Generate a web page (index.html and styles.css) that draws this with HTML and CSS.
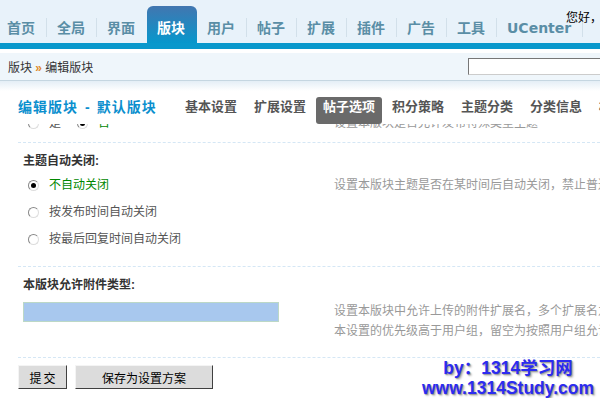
FILE: index.html
```html
<!DOCTYPE html>
<html lang="zh-CN">
<head>
    <meta charset="UTF-8">
    <title>编辑版块</title>
    <link rel="stylesheet" href="styles.css">
</head>
<body>

    <div class="header">
        <ul class="nav">
            <li><a href="#">首页</a></li>
            <li><a href="#">全局</a></li>
            <li><a href="#">界面</a></li>
            <li class="on"><a href="#">版块</a></li>
            <li><a href="#">用户</a></li>
            <li><a href="#">帖子</a></li>
            <li><a href="#">扩展</a></li>
            <li><a href="#">插件</a></li>
            <li><a href="#">广告</a></li>
            <li><a href="#">工具</a></li>
            <li><a href="#" class="latin">UCenter</a></li>
        </ul>
        <div class="welcome">您好，<a href="#">admin</a></div>
    </div>

    <div class="crumb">
        <div class="crumb-path">版块 <span class="raquo">&raquo;</span> 编辑版块</div>
        <input type="text" class="search">
    </div>

    <div class="main">
        <div class="title-bar">
            <h3 class="title">编辑版块<span class="dash">-</span>默认版块</h3>
            <ul class="subtabs">
                <li>基本设置</li>
                <li>扩展设置</li>
                <li class="on">帖子选项</li>
                <li>积分策略</li>
                <li>主题分类</li>
                <li>分类信息</li>
                <li>权限相关</li>
            </ul>
        </div>

        <div class="content">
            <div class="section first">
                <div class="row">
                    <div class="field inline">
                        <label class="opt"><span class="radio"></span>是</label>
                        <label class="opt checked"><span class="radio"></span>否</label>
                    </div>
                    <div class="tips">设置本版块是否允许发布特殊类型主题</div>
                </div>
            </div>

            <div class="section">
                <h4 class="label">主题自动关闭:</h4>
                <div class="row">
                    <div class="field options">
                        <label class="opt checked"><span class="radio"></span>不自动关闭</label>
                        <label class="opt"><span class="radio"></span>按发布时间自动关闭</label>
                        <label class="opt"><span class="radio"></span>按最后回复时间自动关闭</label>
                    </div>
                    <div class="tips tips-top">设置本版块主题是否在某时间后自动关闭，禁止普通用户回复</div>
                </div>
            </div>

            <div class="section">
                <h4 class="label">本版块允许附件类型:</h4>
                <div class="row row-input">
                    <div class="field">
                        <input type="text" class="txt">
                    </div>
                    <div class="tips tips-lines">
                        设置本版块中允许上传的附件扩展名，多个扩展名之间用半角逗号 "," 分割<br>
                        本设置的优先级高于用户组，留空为按照用户组允许的附件类型为准
                    </div>
                </div>
            </div>

            <div class="buttons">
                <button class="btn btn-submit">提交</button>
                <button class="btn btn-save">保存为设置方案</button>
            </div>
        </div>

        <div class="watermark">
            by：1314学习网<br>
            www.1314Study.com
        </div>
    </div>

</body>
</html>
```

FILE: styles.css
```css
html, body {
    overflow: hidden;
}
body {
    margin: 0;
    font-family: "Liberation Sans", "Noto Sans CJK SC", sans-serif;
    font-size: 12px;
    color: #333;
    background-color: #fff;
}
ul {
    list-style: none;
    margin: 0;
    padding: 0;
}
a {
    text-decoration: none;
}

/* top navigation */
.header {
    position: relative;
    height: 43px;
    background-color: #e8f2fa;
    border-bottom: 6px solid #0998cc;
}
.nav {
    display: flex;
    margin-left: -3px;
}
.nav a {
    position: relative;
    display: block;
    margin-top: 6px;
    height: 37px;
    padding: 13px 12px 0 10px;
    box-sizing: border-box;
    line-height: 18px;
    font-family: "DejaVu Sans", "Noto Sans CJK SC", sans-serif;
    font-size: 14px;
    font-weight: bold;
    color: #5a8ea6;
    white-space: nowrap;
}
.nav a::after {
    content: "";
    position: absolute;
    right: 0;
    top: 12px;
    bottom: 6px;
    width: 1px;
    background-color: #d2e0ea;
}
.nav .on a {
    color: #fff;
    border-radius: 6px 6px 0 0;
    background: linear-gradient(#4276b0, #0797cc);
}
.nav .on a::after,
.nav li:has(+ li.on) a::after {
    display: none;
}
.welcome {
    position: absolute;
    left: 566px;
    top: 9px;
    line-height: 18px;
    color: #000;
    white-space: nowrap;
}
.welcome a {
    color: #993300;
}

/* breadcrumb */
.crumb {
    display: flex;
    align-items: center;
    margin-top: 4px;
    height: 27px;
    background-color: #eff6fb;
    border-bottom: 1px solid #c5d6e1;
}
.crumb-path {
    flex: 0 0 460px;
    padding-left: 8px;
    color: #333;
}
.raquo {
    color: #e08a2c;
    font-weight: bold;
}
.search {
    flex-shrink: 0;
    width: 200px;
    height: 17px;
    box-sizing: border-box;
    border: 1px solid #777;
    border-bottom-color: #ccc;
    border-right-color: #ccc;
    background-color: #fff;
}

/* main area, scrolled under the fixed title bar */
.main {
    position: relative;
    height: 317px;
}
.title-bar {
    position: absolute;
    top: 0;
    left: 0;
    right: 0;
    z-index: 2;
    height: 43px;
    display: flex;
    padding: 16px 0 0 18px;
    box-sizing: border-box;
    background: linear-gradient(#e4eef6, #fff 10px);
    white-space: nowrap;
}
.title {
    flex: 0 0 160px;
    margin: 0;
    line-height: 20px;
    font-size: 14px;
    letter-spacing: 1px;
    color: #0b8fce;
}
.dash {
    margin: 0 6px 0 7px;
}
.subtabs {
    display: flex;
}
.subtabs li {
    margin-right: 3px;
    padding: 0 7px;
    line-height: 20px;
    font-size: 13px;
    font-weight: bold;
    color: #555;
    border-radius: 3px;
}
.subtabs .on {
    background-color: #6a6a6a;
    color: #fff;
}

.content {
    padding: 33px 0 0 18px;
    white-space: nowrap;
}
.section {
    padding: 9px 0 16px;
    border-top: 1px dashed #d5e7f5;
}
.section.first {
    padding: 0 0 10px;
    border-top: none;
}
.label {
    margin: 0;
    padding-left: 5px;
    line-height: 18px;
    font-size: 12px;
    color: #333;
}
.row {
    display: flex;
}
.field {
    flex: 0 0 316px;
    padding-left: 5px;
    box-sizing: border-box;
}
.field.inline {
    display: flex;
    line-height: 18px;
}
.options {
    margin-top: 2px;
    padding-bottom: 0;
}
.section:nth-child(2) {
    padding-bottom: 13px;
}
.opt {
    display: flex;
    align-items: center;
    line-height: 27px;
    color: #555;
}
.inline .opt {
    line-height: 18px;
    margin-right: 16px;
}
.opt.checked {
    color: #008800;
}
.radio {
    position: relative;
    width: 9px;
    height: 9px;
    margin: 0 10px 0 5px;
    border: 1px solid;
    border-color: #888 #ddd #ddd #888;
    border-radius: 50%;
    background-color: #fff;
}
.inline .opt + .opt .radio {
    margin-left: 0;
}
.checked .radio::after {
    content: "";
    position: absolute;
    left: 2px;
    top: 2px;
    width: 5px;
    height: 5px;
    border-radius: 50%;
    background-color: #000;
}
.tips {
    line-height: 18px;
    color: #999;
}
.tips-top {
    padding-top: 6px;
}
.row-input {
    margin-top: 7px;
}
.tips-lines {
    line-height: 20px;
}
.txt {
    display: block;
    margin-top: 1px;
    width: 256px;
    height: 20px;
    box-sizing: border-box;
    border: 1px solid #bcd8c6;
    background-color: #a8c8ee;
}

.buttons {
    display: flex;
    gap: 8px;
    padding-top: 7px;
    border-top: 1px dashed #d5e7f5;
}
.btn {
    height: 24px;
    padding: 0;
    font-family: "Liberation Sans", "Noto Sans CJK SC", sans-serif;
    font-size: 12px;
    color: #000;
    background-color: #dcdcdc;
    border: 1px solid;
    border-color: #f4f4f4 #404040 #404040 #f4f4f4;
}
.btn-submit {
    width: 49px;
    letter-spacing: 2px;
    text-indent: 2px;
}
.btn-save {
    width: 138px;
}

/* site watermark over the picture */
.watermark {
    position: absolute;
    left: 418px;
    top: 277px;
    width: 180px;
    z-index: 3;
    text-align: center;
    line-height: 20px;
    font-size: 17.5px;
    font-weight: bold;
    color: #2b2bf0;
    text-shadow: 1px 1px 1px #999, 2px 2px 2px #ccc;
    white-space: nowrap;
}
```
